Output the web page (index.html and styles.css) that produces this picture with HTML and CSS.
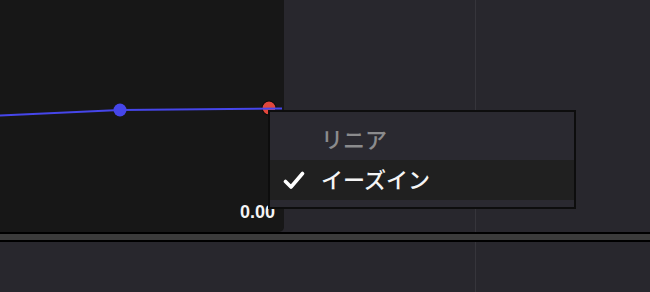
FILE: index.html
```html
<!DOCTYPE html>
<html lang="ja">
<head>
  <meta charset="UTF-8" />
  <title>Curve Editor - Easing Menu</title>
  <link rel="stylesheet" href="styles.css">
</head>
<body>
  <div class="editor">
    <div class="top">
      <div class="graph">
        <svg class="curve" width="284" height="232" viewBox="0 0 284 232">
          <circle cx="269" cy="108" r="7" fill="#e0473c" stroke="#0b0b0b" stroke-width="1.2" />
          <path d="M0 115.5 L120 110 L282 108.5" fill="none" stroke="#4646ea" stroke-width="2" />
          <circle cx="120" cy="110" r="6.5" fill="#4646ea" />
        </svg>
        <span class="axis-label">0.00</span>
      </div>
      <div class="lane"></div>
      <div class="lane-rest"></div>
    </div>

    <div class="divider"></div>

    <div class="bottom">
      <div class="lane-wide"></div>
      <div class="lane-rest"></div>
    </div>

    <!-- easing popup menu -->
    <div class="menu">
      <div class="menu-item disabled">
        <span class="check"></span>
        <span class="label">リニア</span>
      </div>
      <div class="menu-item selected">
        <span class="check">
          <svg width="22" height="19" viewBox="0 0 22 19">
            <path d="M2.5 10.5 L8 16 L19.5 2.5" fill="none" stroke="#fff" stroke-width="3.6" stroke-linecap="round" stroke-linejoin="round" />
          </svg>
        </span>
        <span class="label">イーズイン</span>
      </div>
    </div>
  </div>
</body>
</html>
```

FILE: styles.css
```css
html, body {
  margin: 0;
  height: 100%;
  background-color: #28272d;
  font-family: "Liberation Sans", "Noto Sans CJK JP", sans-serif;
  overflow: hidden;
}

.editor {
  position: relative;
  width: 650px;
  height: 292px;
  display: flex;
  flex-direction: column;
}

.top {
  height: 232px;
  display: flex;
}

/* Dark curve area */
.graph {
  position: relative;
  width: 284px;
  background-color: #171717;
  border-bottom-right-radius: 5px;
}

.curve {
  position: absolute;
  left: 0;
  top: 0;
}

.axis-label {
  position: absolute;
  right: 9px;
  top: 202px;
  font-size: 18px;
  font-weight: bold;
  color: #f4f4f4;
}

/* Column lanes with the thin separator at 476px */
.lane {
  width: 191px;
  border-right: 1px solid #36353b;
}

.lane-wide {
  width: 475px;
  border-right: 1px solid #36353b;
}

.lane-rest {
  flex: 1;
}

.divider {
  height: 6px;
  background-color: #3b3b3b;
  border-top: 2px solid #000;
  border-bottom: 2px solid #000;
}

.bottom {
  flex: 1;
  display: flex;
}

/* Popup menu */
.menu {
  position: absolute;
  left: 268px;
  top: 110px;
  width: 304px;
  padding: 8px 0 7px;
  background-color: #2a2930;
  border: 2px solid #0d0d0d;
}

.menu-item {
  height: 40px;
  display: flex;
  align-items: center;
  padding-left: 13px;
  font-family: "Noto Sans CJK JP", sans-serif;
  font-size: 22px;
  font-weight: 500;
  line-height: 1;
}

.menu-item .label {
  margin-top: -5px;
}

.menu-item .check {
  width: 22px;
  height: 19px;
  margin-right: 16px;
  display: flex;
}

.disabled {
  color: #8b8b8d;
}

.selected {
  background-color: #202020;
  color: #f5f5f5;
}
```
